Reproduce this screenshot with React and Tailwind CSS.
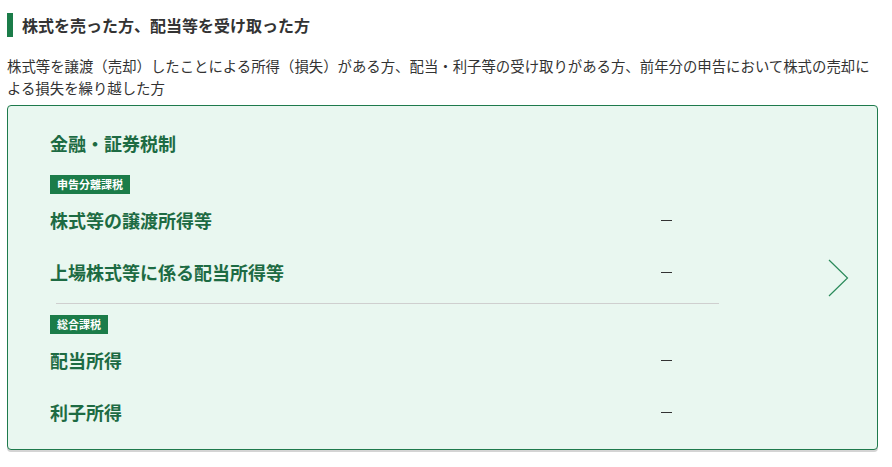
export default function App() {
  const font = { fontFamily: '"Noto Sans CJK JP", "Noto Sans", sans-serif' };
  const Row = ({ label }) => (
    <div className="flex h-[52px] items-center">
      <div className="w-[611px] text-[18px] font-bold leading-[24px] text-[#1d6b43]">{label}</div>
      <div className="h-px w-[11px] bg-[#333]" />
    </div>
  );
  const Badge = ({ children }) => (
    <div className="flex">
      <div className="flex h-[19px] items-center bg-[#1b7c49] px-[7px] text-[11px] font-bold leading-none text-white">
        {children}
      </div>
    </div>
  );
  return (
    <div className="w-[892px] h-[467px] bg-white px-[7px] pt-[13px]" style={font}>
      <div className="flex h-[24px] items-center">
        <div className="h-[24px] w-[6px] bg-[#1b7c49]" />
        <div className="ml-[9px] text-[16px] font-bold leading-[24px] text-[#333]">株式を売った方、配当等を受け取った方</div>
      </div>
      <p className="mt-[18px] w-[871px] text-[14.4px] leading-[22px] text-[#333]">
        株式等を譲渡（売却）したことによる所得（損失）がある方、配当・利子等の受け取りがある方、前年分の申告において株式の売却による損失を繰り越した方
      </p>
      <div className="mt-[6px] flex w-[871px] rounded-[4px] border border-[#1e7a4c] bg-[#e9f7f0] shadow-[0_2px_0_#d4d4d4]">
        <div className="w-[712px] pl-[42px] pt-[25px] pb-[11px]">
          <div className="h-[24px] text-[18px] font-bold leading-[24px] text-[#1d6b43]">金融・証券税制</div>
          <div className="mt-[20px]"><Badge>申告分離課税</Badge></div>
          <Row label="株式等の譲渡所得等" />
          <Row label="上場株式等に係る配当所得等" />
          <div className="ml-[6px] mt-[5px] h-px w-[663px] bg-[#cfcfcf]" />
          <div className="mt-[11px]"><Badge>総合課税</Badge></div>
          <Row label="配当所得" />
          <Row label="利子所得" />
        </div>
        <div className="flex flex-1 items-center pl-[108px]">
          <svg width="22" height="38" viewBox="0 0 22 38" fill="none">
            <path d="M1 1 L19.5 19 L1 37" stroke="#2a8a5a" strokeWidth="1.2" />
          </svg>
        </div>
      </div>
    </div>
  );
}
